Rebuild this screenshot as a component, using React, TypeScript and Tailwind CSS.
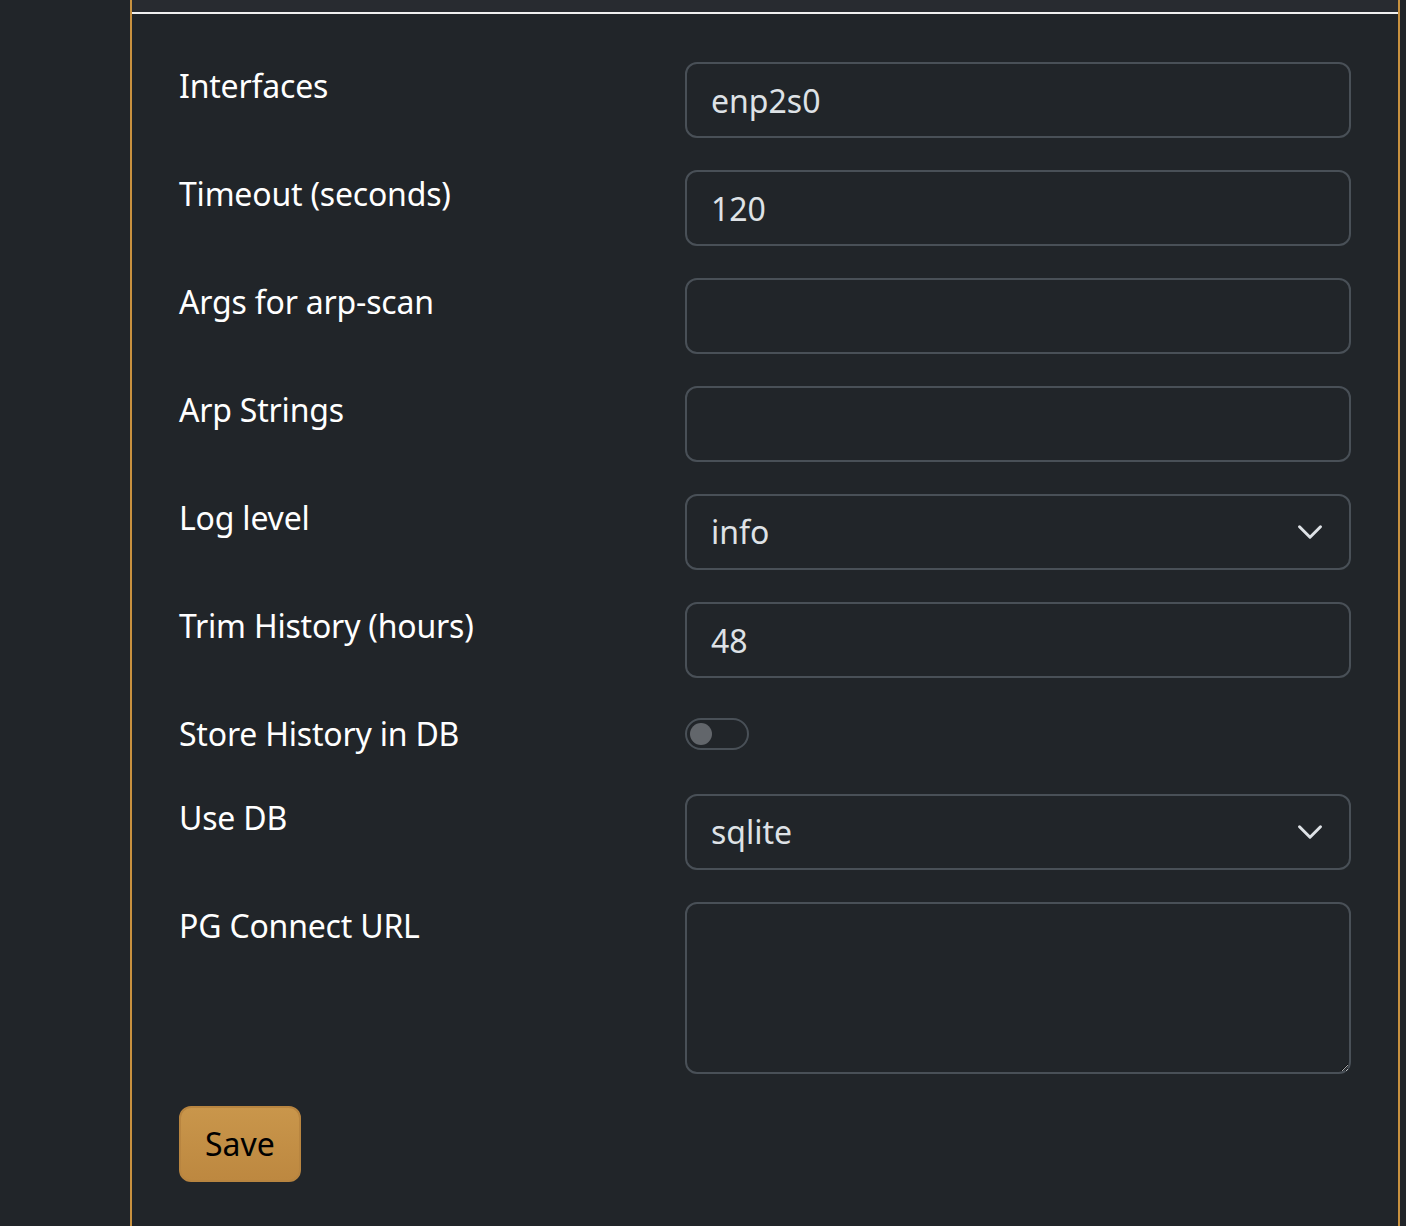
import { useState } from "react";

const inputCls =
  "block h-[76px] w-full rounded-[12px] border-2 border-[#495057] bg-[#212529] px-6 text-[32px] leading-[48px] text-[#dee2e6] outline-none";

function Row({ label, children, last }: { label: string; children: React.ReactNode; last?: boolean }) {
  return (
    <div className={`grid grid-cols-[506px_1fr] ${last ? "" : "mb-8"}`}>
      <label className="text-[32px] leading-[48px] tracking-[-0.2px] text-white">{label}</label>
      <div>{children}</div>
    </div>
  );
}

function Select({ value, options }: { value: string; options: string[] }) {
  return (
    <div className="relative">
      <select defaultValue={value} className={`${inputCls} appearance-none pr-[108px]`}>
        {options.map((o) => (
          <option key={o}>{o}</option>
        ))}
      </select>
      <svg
        className="pointer-events-none absolute right-[27px] top-6 h-7 w-7"
        viewBox="0 0 16 16"
        fill="none"
        stroke="#dee2e6"
        strokeWidth="1.7"
        strokeLinecap="round"
        strokeLinejoin="round"
      >
        <path d="m2 5 6 6 6-6" />
      </svg>
    </div>
  );
}

export default function App() {
  const [storeHistory, setStoreHistory] = useState(false);

  return (
    <div className="min-h-screen bg-[#212529] pl-[130px] font-['Noto_Sans','Open_Sans',sans-serif]">
      <div className="w-[1270px] min-h-[1226px] border-x-2 border-[#c8913f]">
        <div className="h-[14px] border-b-2 border-[#f0f0f0] bg-[#282b30]" />
        <form className="px-[47px] pt-12 pb-12" onSubmit={(e) => e.preventDefault()}>
          <Row label="Interfaces">
            <input className={inputCls} defaultValue="enp2s0" />
          </Row>
          <Row label="Timeout (seconds)">
            <input className={inputCls} defaultValue="120" />
          </Row>
          <Row label="Args for arp-scan">
            <input className={inputCls} defaultValue="" />
          </Row>
          <Row label="Arp Strings">
            <input className={inputCls} defaultValue="" />
          </Row>
          <Row label="Log level">
            <Select value="info" options={["debug", "info", "warn", "error"]} />
          </Row>
          <Row label="Trim History (hours)">
            <input className={inputCls} defaultValue="48" />
          </Row>
          <Row label="Store History in DB">
            <div className="h-[52px] pt-2">
              <button
                type="button"
                onClick={() => setStoreHistory(!storeHistory)}
                className={`flex h-8 w-16 items-center rounded-full border-2 border-[#495057] px-[3px] ${
                  storeHistory ? "justify-end bg-[#c8913f]" : "justify-start bg-[#212529]"
                }`}
              >
                <span className={`h-[22px] w-[22px] rounded-full ${storeHistory ? "bg-white" : "bg-[#62666b]"}`} />
              </button>
            </div>
          </Row>
          <Row label="Use DB">
            <Select value="sqlite" options={["sqlite", "postgres"]} />
          </Row>
          <Row label="PG Connect URL">
            <textarea
              rows={3}
              className="block h-[172px] w-full resize-y rounded-[12px] border-2 border-[#495057] bg-[#212529] px-6 py-3 text-[32px] leading-[48px] text-[#dee2e6] outline-none"
            />
          </Row>
          <button
            type="submit"
            className="h-[76px] rounded-[12px] border-2 border-[#b88540] bg-gradient-to-b from-[#c9964b] to-[#bd8840] px-6 text-[32px] leading-[48px] text-black"
          >
            Save
          </button>
        </form>
      </div>
    </div>
  );
}
